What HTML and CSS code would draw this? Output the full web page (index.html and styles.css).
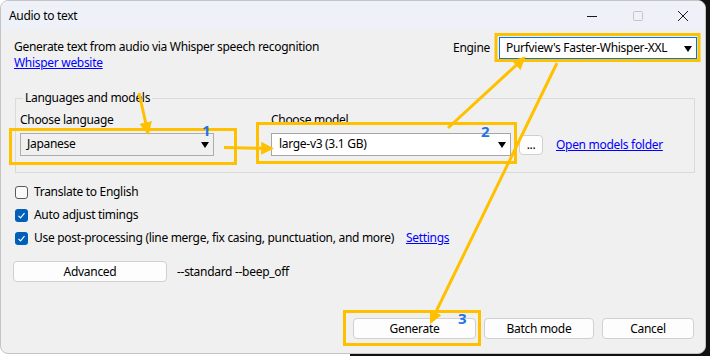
FILE: index.html
```html
<!DOCTYPE html>
<html lang="en">
<head>
    <meta charset="UTF-8">
    <meta name="viewport" content="width=device-width, initial-scale=1.0">
    <title>Audio to text</title>
    <link rel="stylesheet" href="styles.css">
</head>
<body>
    <div class="window">
        <div class="titlebar">
            <span class="title">Audio to text</span>
            <div class="win-controls">
                <span class="win-btn">
                    <svg width="10" height="10" viewBox="0 0 10 10"><path d="M0 5.5h10" stroke="#1a1a1a" stroke-width="1"/></svg>
                </span>
                <span class="win-btn">
                    <svg width="10" height="10" viewBox="0 0 10 10"><rect x="0.5" y="0.5" width="9" height="9" rx="1" fill="none" stroke="#c4c4c4"/></svg>
                </span>
                <span class="win-btn win-close">
                    <svg width="10" height="10" viewBox="0 0 10 10"><path d="M0 0L10 10M10 0L0 10" stroke="#1a1a1a" stroke-width="1"/></svg>
                </span>
            </div>
        </div>

        <div class="content">
            <div class="header">
                <div class="intro">
                    <div>Generate text from audio via Whisper speech recognition</div>
                    <a class="link">Whisper website</a>
                </div>
                <div class="engine">
                    <span>Engine</span>
                    <div class="combo combo-engine">Purfview's Faster-Whisper-XXL<span class="caret"></span></div>
                </div>
            </div>

            <fieldset class="group">
                <legend>Languages and models</legend>
                <div class="field field-lang">
                    <div class="field-label">Choose language</div>
                    <div class="combo combo-list">Japanese<span class="caret"></span></div>
                </div>
                <div class="field">
                    <div class="field-label">Choose model</div>
                    <div class="model-row">
                        <div class="combo combo-model">large-v3 (3.1 GB)<span class="caret"></span></div>
                        <button class="btn btn-dots">...</button>
                        <a class="link">Open models folder</a>
                    </div>
                </div>
            </fieldset>

            <div class="checks">
                <label class="check"><span class="box"></span>Translate to English</label>
                <label class="check"><span class="box checked"><svg width="13" height="13" viewBox="0 0 13 13"><path d="M3.5 6.8l2 2 4-4.6" fill="none" stroke="#fff" stroke-width="1.2"/></svg></span>Auto adjust timings</label>
                <label class="check"><span class="box checked"><svg width="13" height="13" viewBox="0 0 13 13"><path d="M3.5 6.8l2 2 4-4.6" fill="none" stroke="#fff" stroke-width="1.2"/></svg></span>Use post-processing (line merge, fix casing, punctuation, and more)<a class="link settings">Settings</a></label>
            </div>

            <div class="advanced-row">
                <button class="btn btn-advanced">Advanced</button>
                <span>--standard --beep_off</span>
            </div>

            <div class="actions">
                <button class="btn btn-generate">Generate</button>
                <button class="btn btn-batch">Batch mode</button>
                <button class="btn btn-cancel">Cancel</button>
            </div>
        </div>

        <!-- callouts drawn over the dialog -->
        <svg class="callouts" width="706" height="354" viewBox="0 0 706 354">
            <defs>
                <marker id="head" viewBox="0 0 12 12" refX="10" refY="6" markerWidth="13" markerHeight="13" markerUnits="userSpaceOnUse" orient="auto">
                    <path d="M0 0L12 6L0 12Z" fill="#ffc000"/>
                </marker>
            </defs>
            <g fill="none" stroke="#ffc000" stroke-width="3">
                <rect x="496" y="34.5" width="203" height="26"/>
                <rect x="10.5" y="129.5" width="225" height="34"/>
                <rect x="257.5" y="123.5" width="258" height="39"/>
                <rect x="344.5" y="311.5" width="135" height="33"/>
                <path d="M139 93L148 133" marker-end="url(#head)"/>
                <path d="M224 147.5L272 148.5" marker-end="url(#head)"/>
                <path d="M448 128L524 58" marker-end="url(#head)"/>
                <path d="M557 63L431 322" marker-end="url(#head)"/>
            </g>
            <g class="num">
                <text x="202" y="136">1</text>
                <text x="481" y="137">2</text>
                <text x="458" y="324">3</text>
            </g>
        </svg>
    </div>
</body>
</html>
```

FILE: styles.css
```css
body {
    margin: 0;
    width: 710px;
    height: 356px;
    overflow: hidden;
    font-family: 'Noto Sans', 'Liberation Sans', sans-serif;
    font-size: 12px;
    letter-spacing: -0.3px;
    color: #000;
    background: linear-gradient(to right, #fff 350px, #111 350px);
}
.window {
    position: relative;
    width: 706px;
    height: 354px;
    box-sizing: border-box;
    border: 1px solid #c4c4c4;
    border-radius: 8px;
    background-color: #f0f0f0;
    overflow: hidden;
}
.titlebar {
    height: 29px;
    display: flex;
    align-items: center;
    background-color: #eef2f8;
    padding-left: 8px;
}
.title {
    flex: 1;
    font-size: 12px;
}
.win-controls {
    display: flex;
    height: 100%;
}
.win-btn {
    width: 46px;
    display: flex;
    align-items: center;
    justify-content: center;
}
.win-close {
    width: 44px;
}
.content {
    height: 324px;
    box-sizing: border-box;
    display: flex;
    flex-direction: column;
    padding: 9px 10px 15px 13px;
}
.header {
    display: flex;
    justify-content: space-between;
    align-items: flex-start;
    line-height: 16px;
}
.intro a {
    display: inline-block;
}
.link {
    color: #0000ff;
    text-decoration: underline;
    cursor: pointer;
}
.engine {
    display: flex;
    align-items: center;
    gap: 9px;
    margin-top: -2px;
    margin-right: -2px;
}
.combo {
    position: relative;
    box-sizing: border-box;
    height: 22px;
    line-height: 20px;
    padding-left: 6px;
    background-color: #fff;
    border: 1px solid #a6a6a6;
}
.combo-engine {
    width: 198px;
    border-color: #0078d7;
}
.combo-list {
    width: 194px;
    height: 23px;
    margin-top: 3px;
    background-color: #f0f0f0;
    border-color: #adadad;
}
.combo-model {
    width: 240px;
    height: 23px;
    padding-left: 7px;
}
.caret {
    position: absolute;
    right: 4px;
    top: 8px;
    border-left: 4px solid transparent;
    border-right: 4px solid transparent;
    border-top: 6px solid #000;
}
.group {
    margin: 19px 0 0 1px;
    padding: 2px 4px 16px 4px;
    border: 1px solid #dadada;
    display: flex;
    gap: 57px;
}
.group legend {
    padding: 0 2px;
    margin-left: 3px;
    line-height: 16px;
}
.field-label {
    margin-top: 4px;
    margin-bottom: 5px;
    line-height: 16px;
}
.model-row {
    display: flex;
    align-items: center;
}
.btn {
    font-family: inherit;
    font-size: 12px;
    letter-spacing: inherit;
    color: #000;
    background-color: #fdfdfd;
    border: 1px solid #d0d0d0;
    border-radius: 4px;
    height: 21px;
    padding: 0;
    box-sizing: border-box;
}
.btn-dots {
    width: 24px;
    height: 20px;
    margin-left: 8px;
    margin-right: 13px;
    line-height: 12px;
}
.checks {
    margin-top: 11px;
    display: flex;
    flex-direction: column;
    gap: 7px;
}
.check {
    display: flex;
    align-items: center;
    height: 16px;
    line-height: 16px;
}
.box {
    width: 13px;
    height: 13px;
    box-sizing: border-box;
    border: 1px solid #5a5a5a;
    border-radius: 3px;
    background-color: #fafafa;
    margin-right: 6px;
    margin-left: 1px;
}
.box.checked {
    border: none;
    background-color: #005fb8;
}
.box svg {
    display: block;
}
.settings {
    margin-left: 12px;
}
.advanced-row {
    display: flex;
    align-items: center;
    margin-top: 15px;
    margin-left: -1px;
    gap: 10px;
}
.btn-advanced {
    width: 154px;
}
.actions {
    margin-top: auto;
    display: flex;
    justify-content: flex-end;
    gap: 8px;
    margin-right: 1px;
}
.btn-generate {
    width: 123px;
}
.btn-batch {
    width: 110px;
}
.btn-cancel {
    width: 92px;
}
.callouts {
    position: absolute;
    top: -1px;
    left: -1px;
    pointer-events: none;
}
.num text {
    font-family: 'Noto Sans', sans-serif;
    font-weight: bold;
    font-size: 15px;
    fill: #1e73e8;
}
```
